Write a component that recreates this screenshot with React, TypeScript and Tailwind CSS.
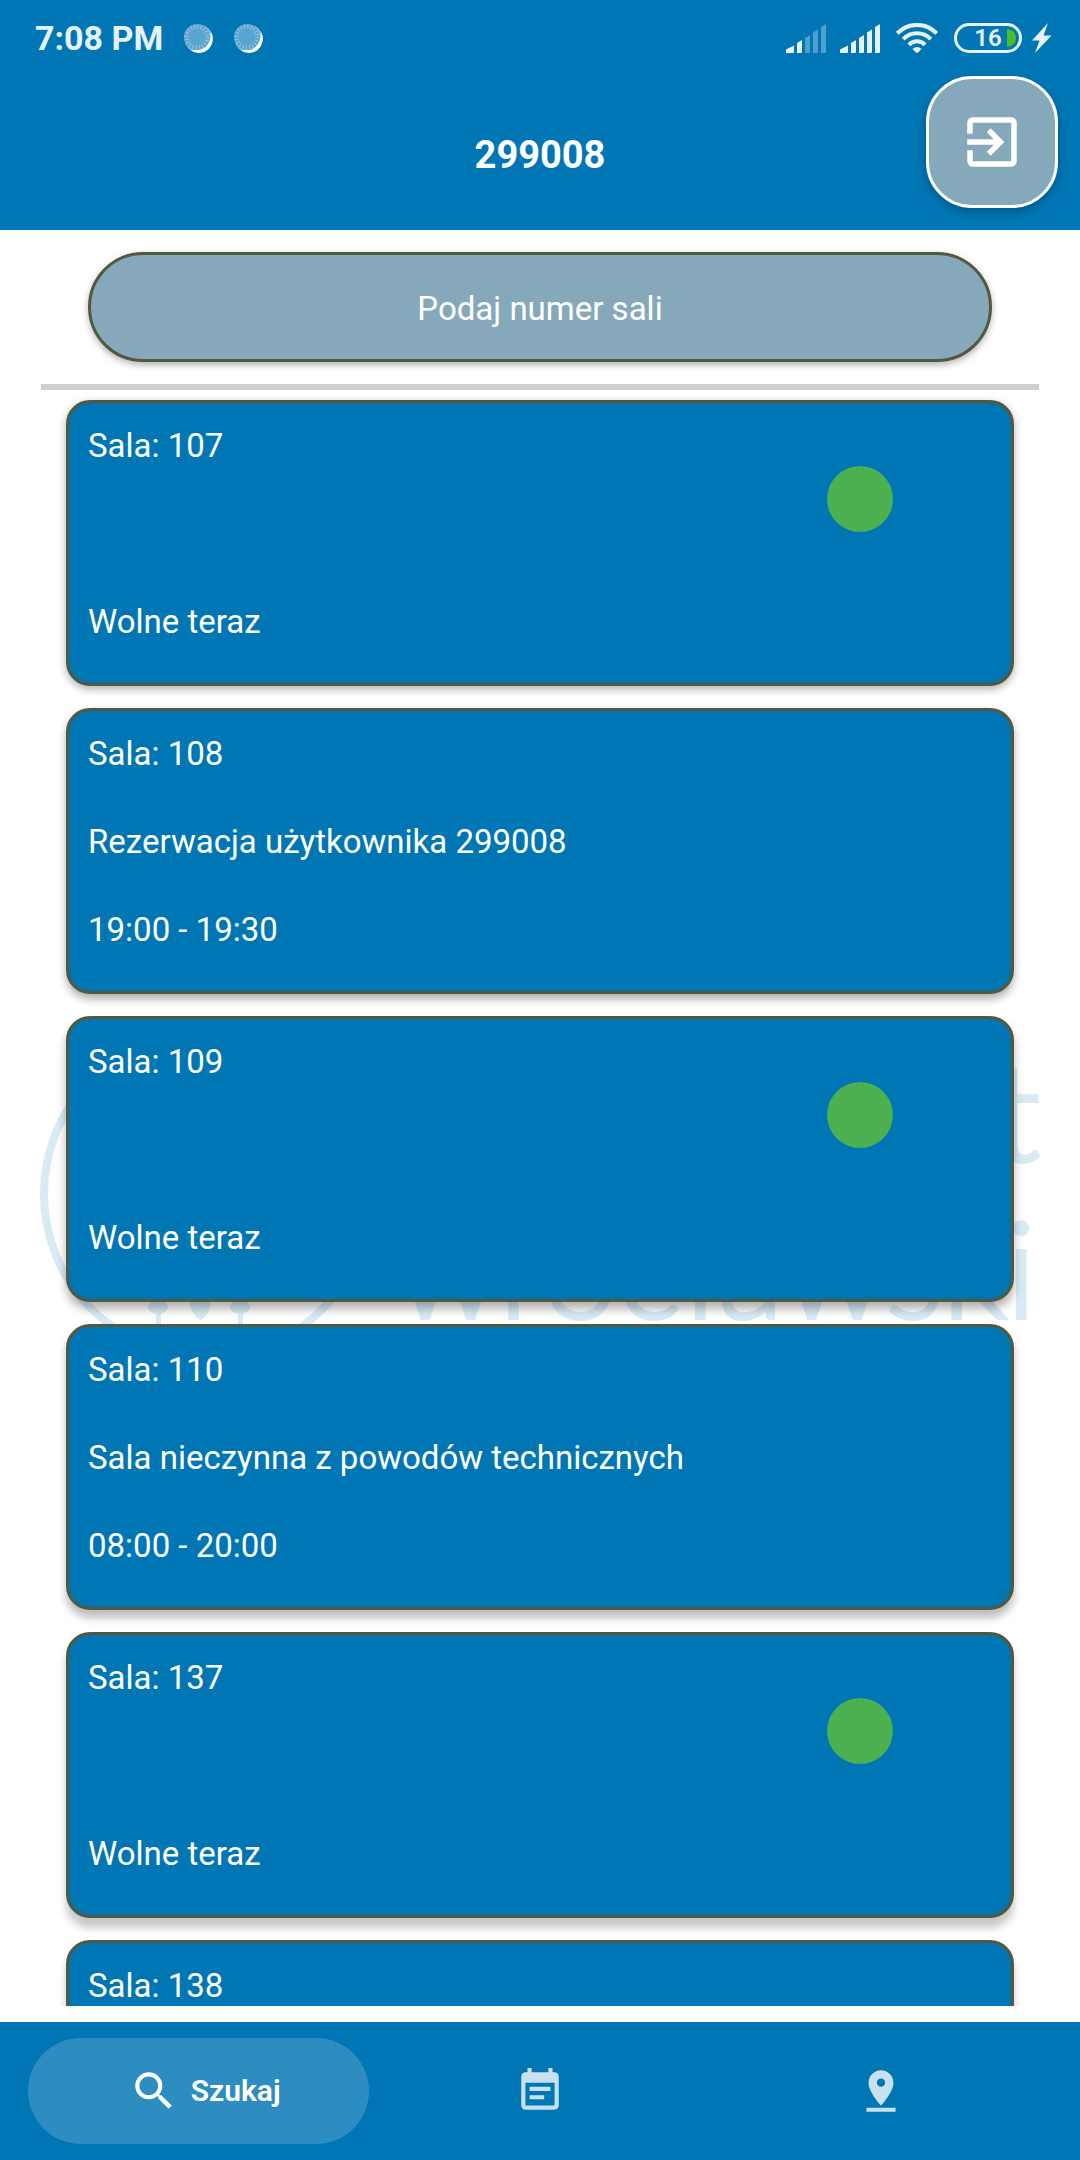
import { MdEventNote, MdExitToApp, MdPinDrop, MdSearch } from "react-icons/md";

type Room = {
  number: string;
  detail?: string;
  status: string;
  free: boolean;
  shadow: string;
};

const rooms: Room[] = [
  { number: "107", status: "Wolne teraz", free: true, shadow: "shadow-[0_3px_8px_rgba(0,0,0,0.32)]" },
  { number: "108", detail: "Rezerwacja użytkownika 299008", status: "19:00 - 19:30", free: false, shadow: "shadow-[0_5px_9px_rgba(0,0,0,0.32)]" },
  { number: "109", status: "Wolne teraz", free: true, shadow: "shadow-[0_7px_10px_rgba(0,0,0,0.30)]" },
  { number: "110", detail: "Sala nieczynna z powodów technicznych", status: "08:00 - 20:00", free: false, shadow: "shadow-[0_8px_9px_rgba(0,0,0,0.26)]" },
  { number: "137", status: "Wolne teraz", free: true, shadow: "shadow-[0_10px_8px_rgba(0,0,0,0.22)]" },
  { number: "138", status: "Wolne teraz", free: true, shadow: "shadow-[0_10px_8px_rgba(0,0,0,0.22)]" },
];

function NotificationDot() {
  return (
    <svg viewBox="0 0 30 30" className="size-[30px]" aria-hidden="true">
      <circle cx="15.5" cy="15.5" r="14" fill="#8fc3df" />
      <path d="M28.2 9.5 A14 14 0 0 1 8 27.6 L11 27 A15 15 0 0 0 27.6 10 Z" fill="#ffffff" />
      <circle cx="14" cy="14" r="13" fill="#59a5cf" />
      <circle cx="14" cy="14" r="10.5" fill="none" stroke="#8fc3df" strokeWidth="4" strokeDasharray="1.2 2.1" />
    </svg>
  );
}

function Signal({ strength }: { strength: number }) {
  const bars = [
    "M0 29 V25.5 L8 21.5 V28 Q8 29 7 29 Z",
    "M11 29 V19 L16 16 V28 Q16 29 15 29 H12 Z",
    "M19 29 V14 L24 11 V28 Q24 29 23 29 H20 Z",
    "M27 29 V8.5 L32 5.5 V28 Q32 29 31 29 H28 Z",
    "M35 29 V3 L40 0 V28 Q40 29 39 29 H36 Z",
  ];
  return (
    <svg viewBox="0 0 40 29" className="h-[29px] w-10" aria-hidden="true">
      {bars.map((d, i) => (
        <path key={d} d={d} fill={i < strength ? "#e6f2f8" : "#4d9fcc"} />
      ))}
    </svg>
  );
}

function Wifi() {
  return (
    <svg viewBox="0 0 42 30" className="h-[30px] w-[42px]" aria-hidden="true">
      <g fill="none" stroke="#e6f2f8" strokeWidth="4">
        <path d="M1.3 10.3 C12.5 -0.9 29.5 -0.9 40.7 10.3" />
        <path d="M7.2 16.2 C15 8.4 27 8.4 34.8 16.2" />
        <path d="M12.9 21.8 C17.5 17 24.5 17 29.1 21.8" />
      </g>
      <path d="M16.5 26 Q21 21.8 25.5 26 L22.3 29.3 Q21 30.4 19.7 29.3 Z" fill="#e6f2f8" />
    </svg>
  );
}

function StatusBar() {
  return (
    <div className="flex h-[76px] items-center pl-[35px] pr-7 text-[#e6f2f8]">
      <span className="text-[34px] leading-10 font-bold">7:08 PM</span>
      <div className="ml-5 flex gap-5">
        <NotificationDot />
        <NotificationDot />
      </div>
      <div className="ml-auto flex items-center">
        <Signal strength={2} />
        <div className="w-[14px]" />
        <Signal strength={5} />
        <div className="w-4" />
        <Wifi />
        <div className="relative ml-4 flex h-[30px] w-[68px] items-center justify-center overflow-hidden rounded-full border-[3px] border-[#e6f2f8]">
          <span className="font-[Roboto] text-[24px] leading-6 font-semibold">16</span>
          <svg viewBox="0 0 9 18" className="absolute right-[3px] h-[18px] w-[9px]" aria-hidden="true">
            <path d="M0 0 Q9 1 9 9 Q9 17 0 18 Z" fill="#4bbd22" />
          </svg>
        </div>
        <svg viewBox="0 0 20 30" className="ml-[10px] h-[30px] w-5" aria-hidden="true">
          <path d="M16 0 L0 17.5 H7.5 L3 30 L19.5 12.5 H11.5 Z" fill="#e6f2f8" />
        </svg>
      </div>
    </div>
  );
}

function Watermark() {
  return (
    <svg
      viewBox="0 0 1000 340"
      className="pointer-events-none absolute inset-x-10 top-[794px]"
      aria-hidden="true"
    >
      <g fill="#d8eaf4" stroke="none">
        <circle cx="167" cy="170" r="163" fill="none" stroke="#d8eaf4" strokeWidth="8" />
        <ellipse cx="118" cy="283" rx="10" ry="7" />
        <ellipse cx="200" cy="283" rx="10" ry="7" />
        <rect x="116" y="283" width="5" height="34" />
        <rect x="198" y="283" width="5" height="34" />
        <path d="M148 268 C148 285 156 295 161 296 C168 292 172 284 172 266 Z" />
        <g stroke="#d8eaf4" strokeWidth="4" fontFamily="Lato, sans-serif" fontWeight="300" fontSize="134">
          <text x="1000" y="137" textAnchor="end">Uniwersytet</text>
          <text x="996" y="294" textAnchor="end">wrocławski</text>
        </g>
      </g>
    </svg>
  );
}

function RoomCard({ room }: { room: Room }) {
  return (
    <li
      className={`flex shrink-0 items-start justify-between rounded-[24px] border-[3px] border-[#53593f] bg-[#0076b5] pt-[21px] pr-[118px] pb-[39px] pl-[19px] ${room.shadow}`}
    >
      <div className="flex flex-col gap-11">
        <h2 className="h-11">Sala: {room.number}</h2>
        <p className="h-11">{room.detail}</p>
        <p className="h-11">{room.status}</p>
      </div>
      {room.free && <div className="mt-[42px] size-[66px] rounded-full bg-[#4caf50]" />}
    </li>
  );
}

export default function App() {
  return (
    <div className="flex h-screen flex-col bg-white font-[Roboto,sans-serif] text-[33px] leading-[44px] text-white">
      <header className="relative h-[230px] shrink-0 bg-[#0076b5]">
        <StatusBar />
        <h1 className="pt-14 text-center text-[38px] leading-[46px] font-bold">299008</h1>
        <button
          type="button"
          aria-label="Wyloguj"
          className="absolute top-[76px] right-[22px] flex size-[132px] items-center justify-center rounded-[46px] border-[3px] border-white bg-[#86a8bb] shadow-[0_4px_10px_rgba(0,0,0,0.25)]"
        >
          <MdExitToApp className="size-[66px]" />
        </button>
      </header>

      <main className="relative flex min-h-0 flex-1 flex-col pb-4">
        <Watermark />
        <div className="relative px-[88px] pt-[22px]">
          <input
            type="text"
            aria-label="Podaj numer sali"
            placeholder="Podaj numer sali"
            className="block h-[110px] w-full rounded-full border-[3px] border-[#53593f] bg-[#86a8bb] pt-0.5 text-center shadow-[0_3px_7px_rgba(0,0,0,0.3)] outline-none placeholder:text-white"
          />
        </div>
        <hr className="relative mx-[41px] mt-[22px] h-[6px] border-0 bg-[#d0d0d0]" />
        <ul className="relative flex min-h-0 flex-1 flex-col gap-[22px] overflow-y-auto px-[66px] pt-[10px] [scrollbar-width:none]">
          {rooms.map((room) => (
            <RoomCard key={room.number} room={room} />
          ))}
        </ul>
      </main>

      <nav className="grid h-[138px] shrink-0 grid-cols-3 items-center bg-[#0076b5] px-7">
        <button
          type="button"
          aria-current="page"
          className="flex h-[106px] items-center justify-center gap-3 rounded-full bg-[#2d8dc1] pl-3"
        >
          <MdSearch className="size-[50px]" />
          <span className="text-[30px] font-semibold">Szukaj</span>
        </button>
        <button type="button" aria-label="Rezerwacje" className="flex h-[106px] items-center justify-center text-[#c8e1ef]">
          <MdEventNote className="size-[50px]" />
        </button>
        <button type="button" aria-label="Mapa" className="flex h-[106px] items-center justify-center text-[#c8e1ef]">
          <MdPinDrop className="size-[50px]" />
        </button>
      </nav>
    </div>
  );
}
